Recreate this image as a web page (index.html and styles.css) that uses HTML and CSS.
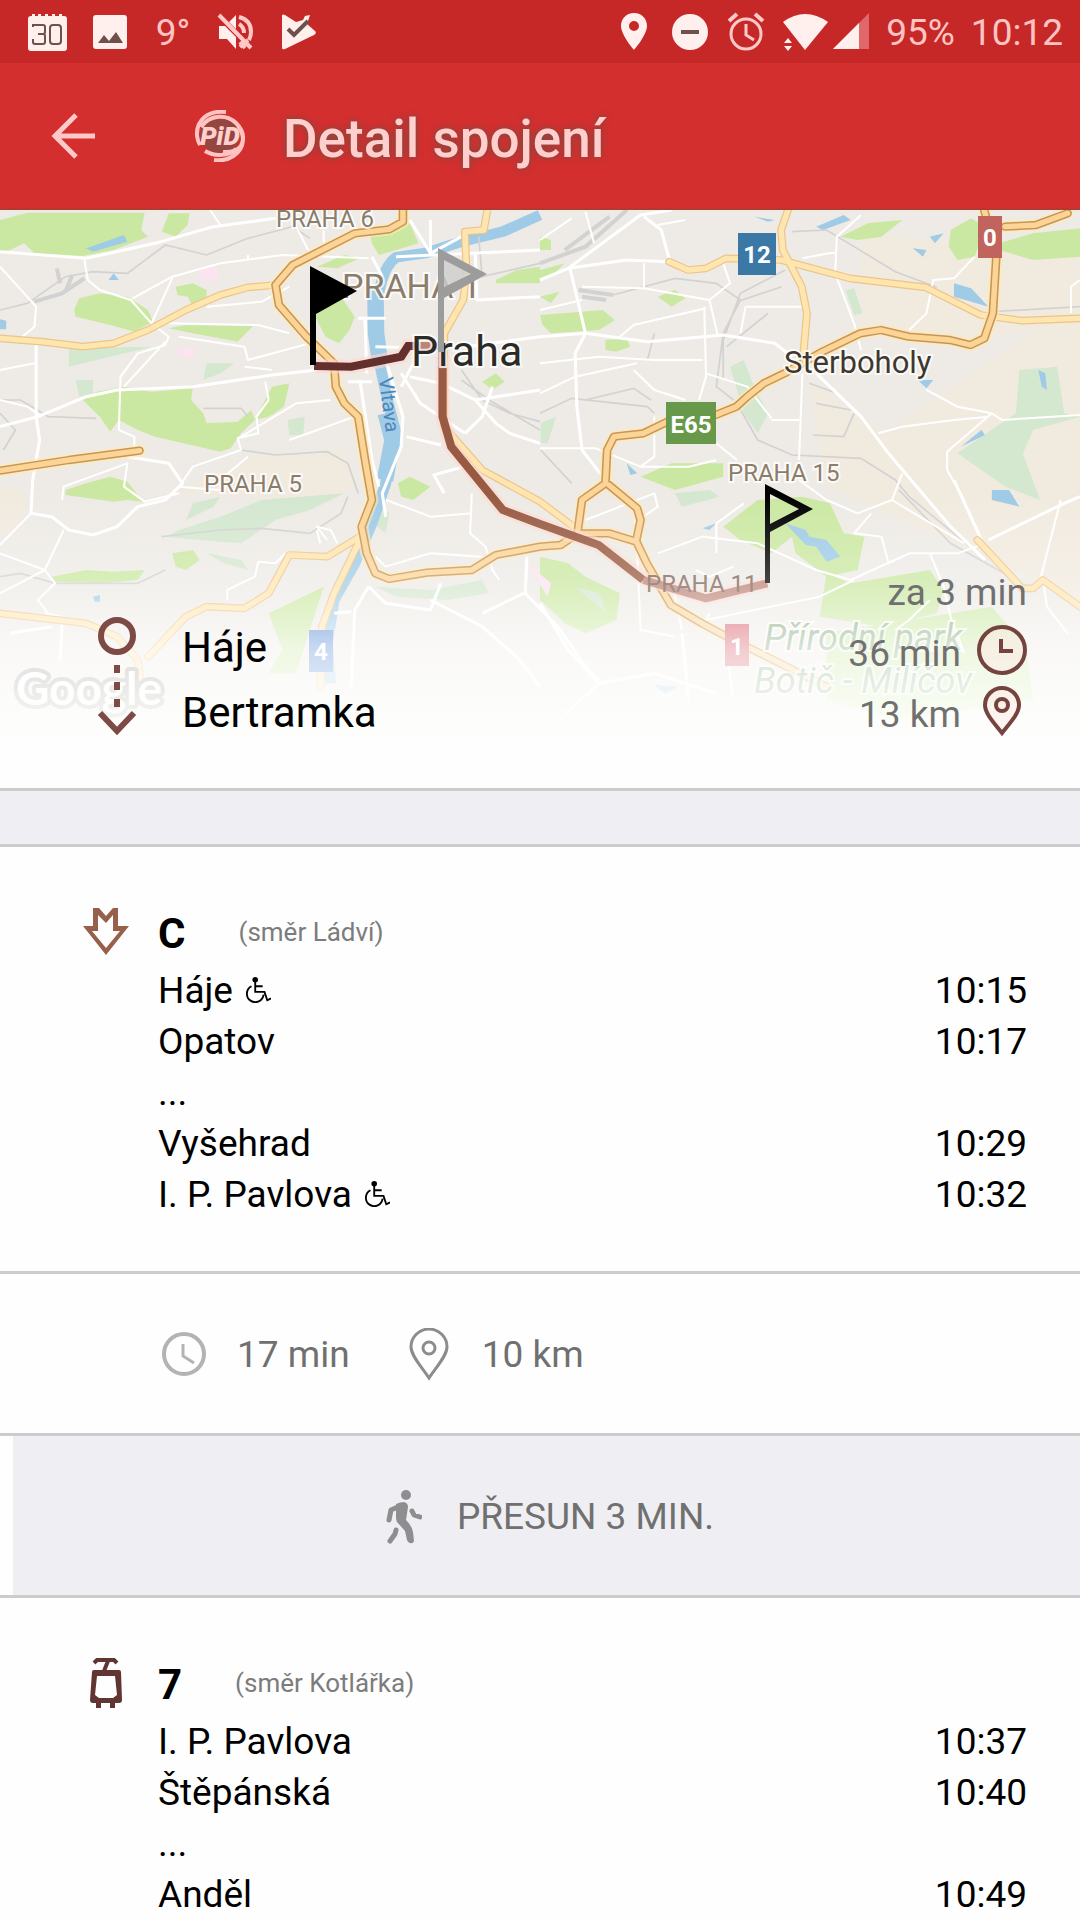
FILE: index.html
```html
<!DOCTYPE html>
<html lang="cs">
<head>
    <meta charset="UTF-8">
    <meta name="viewport" content="width=device-width, initial-scale=1.0">
    <title>Detail spojení</title>
    <link rel="stylesheet" href="styles.css">
</head>
<body>
    <div class="status-bar">
        <div class="status-group notifications">
            <svg width="40" height="40" viewBox="0 0 40 40">
                <path class="fill" d="M3 4h2V2h3v2h3V2h3v2h4V2h3v2h4V2h3v2h4V2h3v2h2q3 0 3 3v29q0 3-3 3H4q-3 0-3-3V7q0-3 3-3z"/>
                <path class="cut-line" d="M6 15v-2h10q2 0 2 2v5q0 2-2 2h-5 5q2 0 2 2v6q0 2-2 2H8q-2 0-2-2v-3M26 13h5q3 0 3 3v13q0 3-3 3h-5q-3 0-3-3V16q0-3 3-3z"/>
            </svg>
            <svg width="40" height="40" viewBox="0 0 40 40">
                <rect class="fill" x="3" y="3" width="34" height="34" rx="3"/>
                <path class="cut" d="M8 31l6-8 5 6 7-9 7 11z"/>
            </svg>
            <span class="temperature">9°</span>
            <svg width="40" height="40" viewBox="0 0 40 40">
                <path class="fill" d="M3 14h6l11 11v12L11 27H3zM13 10l7-7v14z"/>
                <path class="line thick" d="M23 5q12 3 12 15 0 4-2 8M23 12q5 3 5 9M3 3l32 33M24 35l8-7M24 30l5 6"/>
            </svg>
            <svg width="40" height="40" viewBox="0 0 40 40">
                <path class="fill" d="M3 3q1-1 3 0l11 7 7-2 2-4 5-1-3 9 8 7q2 2-1 4L6 37q-3 1-3-1z"/>
                <path class="cut-line heavy" d="M9 17l6 6 14-14"/>
            </svg>
        </div>
        <div class="status-group">
            <svg width="40" height="40" viewBox="0 0 40 40">
                <path class="fill" fill-rule="evenodd" d="M20 1C12 1 7 7 7 14c0 9 13 24 13 24s13-15 13-24C33 7 28 1 20 1zm0 8a5 5 0 1 1 0 10 5 5 0 0 1 0-10z"/>
            </svg>
            <svg width="40" height="40" viewBox="0 0 40 40">
                <circle class="fill" cx="20" cy="20" r="18"/>
                <path class="cut" d="M11 18h18v4H11z"/>
            </svg>
            <svg width="40" height="40" viewBox="0 0 40 40">
                <circle class="line" cx="20" cy="22" r="15"/>
                <path class="line" d="M20 12v11l8 5"/>
                <path class="line thick" d="M3 9l8-7M37 9l-8-7"/>
            </svg>
            <svg width="88" height="40" viewBox="0 0 88 40">
                <path class="fill" d="M1 10Q23-6 46 10L23 38z"/>
                <path class="fill" d="M2 31l4-5 4 5zM2 34h8l-4 5z"/>
                <path class="weak" d="M87 1v36H51z"/>
                <path class="fill" d="M77 11v26H51z"/>
            </svg>
            <span>95%</span>
            <span>10:12</span>
        </div>
    </div>

    <header class="app-bar">
        <button class="back" aria-label="Zpět">
            <svg width="48" height="48" viewBox="0 0 48 48">
                <path d="M27 3L6 24l21 21M6 24h40"/>
            </svg>
        </button>
        <svg class="logo" width="52" height="52" viewBox="0 0 52 52">
            <ellipse class="disc" cx="26" cy="26" rx="20" ry="17"/>
            <path d="M32 2C14 0 2 10 3 26q1 6 3 9M7 17C16 4 33 4 42 13q11 11 5 23-6 7-18 6M20 50c14 2 28-6 29-20 0-6-2-10-5-14M11 41c10 6 24 5 31-2"/>
            <text x="26" y="35">PiD</text>
        </svg>
        <h1>Detail spojení</h1>
    </header>

    <main>
        <section class="hero">
            <svg class="map" viewBox="0 0 1080 525">
                <defs>
                    <linearGradient id="fade" x1="0" y1="0" x2="0" y2="1">
                        <stop offset="0" stop-color="#fff" stop-opacity="0"/>
                        <stop offset="0.38" stop-color="#fff" stop-opacity="0.28"/>
                        <stop offset="0.65" stop-color="#fff" stop-opacity="0.7"/>
                        <stop offset="1" stop-color="#fefffc" stop-opacity="0.96"/>
                    </linearGradient>
                    <g id="minor-highways">
                        <path d="M0 415L120 425 240 440 330 430 430 390 540 330 640 285 720 262 800 255"/>
                        <path d="M1943 185L1998 210 2050 205 2108 175 2268 180 2468 235 2688 262 2848 345 2968 362 3136 355"/>
                        <path d="M2288 30L2268 90 2273 150 2328 260 2343 340 2333 460"/>
                        <path d="M1415 30L1405 90 1350 95 1355 220 1345 300 1290 400 1290 680 1400 810 1568 905 1678 990"/>
                        <path d="M1045 1010L950 1070 840 1065 780 1180 710 1225 600 1220 540 1250 430 1370"/>
                        <path d="M1045 1020L970 1180 935 1280 930 1460"/>
                        <path d="M0 1240L250 1270 340 1310 400 1380 410 1460"/>
                        <path d="M2838 1020L2968 1165 3000 1165 3028 1140 3136 1220"/>
                    </g>
                    <g id="highways">
                        <path d="M1170 30V65L1130 88 1030 100 850 195 800 255 810 315 890 410 970 490 975 560 1000 610 1040 650 1060 780 1080 900 1050 980 1065 1060 1090 1120 1130 1137 1240 1118 1370 1110 1440 1065 1568 1040 1628 1035 1678 1000 1768 1000 1848 1025 1878 1090 1948 1215 2038 1270 2110 1310 2400 1460"/>
                        <path d="M0 812L200 780 405 752"/>
                        <path d="M1678 990L1690 900 1758 850 1763 750 1783 710 1868 700 1938 665 2078 645 2138 620 2170 590 2218 550 2278 520 2388 455 2498 400 2558 390 2638 410 2758 420 2818 435 2858 415 2883 340 2893 170 2858 30"/>
                        <path d="M1768 855L1850 925 1860 960 1848 1020"/>
                        <path d="M2918 80L3008 75 3100 40"/>
                    </g>
                </defs>

                <!-- terrain and roads -->
                <g transform="matrix(.34439 0 0 .33333 0 -10)">
                    <rect class="land" width="3136" height="1610"/>
                    <path class="suburb" d="M2350 540L2568 700 3136 300V1200L2700 1000 2400 860zM2500 100L3136 170V380L2700 430 2500 380zM760 760L1000 750 1040 860 900 900 500 880zM0 860L80 880 60 980 0 1010z"/>
                    <g class="park">
                        <path d="M0 60L80 38H420L410 90 430 110 330 150 240 168 100 160 70 130 30 150 0 155z"/>
                        <path d="M490 40H550L545 75 510 110 470 95zM215 330L230 295 290 280 370 290 430 330 445 365 390 395 320 375 220 350zM490 385L540 375 735 378 690 425 560 400zM510 260L560 250 600 270V310L560 320 545 290 515 285z"/>
                        <path d="M240 600L280 575 360 560 440 575 560 565 555 600 590 640 600 670 690 665 730 630 740 660 700 700 670 745 640 755 450 710 400 690 345 660 320 695 290 650z"/>
                        <path d="M935 320L990 290 1030 350 1015 390 985 430 945 410 915 350zM1075 105L1190 70 1215 130 1150 150 1100 165 1080 130zM790 560L840 550 825 620 780 650 740 660 760 620zM850 550L915 520 860 545zM920 200L1000 165 1045 175 980 205zM1440 240L1500 210 1568 200V250H1440zM1400 545L1440 520 1465 545 1430 570zM1155 850L1190 830 1250 860 1200 900 1165 890z"/>
                        <path d="M190 870L250 850 320 830 370 845 415 905 370 900 330 905 190 885zM150 1130L250 1110 330 1115 420 1110 400 1140 300 1150 160 1145zM500 1060L560 1050 580 1080 540 1110 510 1100z"/>
                        <path d="M780 1240L940 1160 900 1290 860 1420 780 1420 820 1350z"/>
                        <path d="M1568 345L1750 330 1785 360 1740 390 1600 400 1575 375zM1568 110L1600 120V150H1568zM1568 210L1640 190 1600 230 1568 240zM1758 420L1820 415 1830 440 1790 455 1758 450zM1910 290L1960 270 1990 295 1950 320zM2440 110L2520 70 2620 60 2560 110 2490 120zM1568 290L1625 275 1600 310z"/>
                        <path d="M2760 90L2820 55 2860 80 2830 170 2780 180 2755 140zM2900 130L3000 100 3136 85V170L3000 180 2900 150z"/>
                        <path d="M1860 830L1950 790 2100 790 2100 830 1960 870zM2100 980L2200 900 2330 890 2410 910 2450 1000 2510 1010 2490 1110 2400 1130 2310 1060 2300 1010 2240 1060 2150 1020z"/>
                        <path d="M2400 1120L2470 1150 2700 1110 2740 1170 2720 1240 2560 1280 2380 1250zM2400 1300L2880 1220 2980 1340 3000 1500 2600 1560 2400 1500zM1568 1070L1650 1090 1700 1130 1800 1180 1790 1260 1700 1300 1640 1270 1568 1200z"/>
                    </g>
                    <path class="wood" d="M220 540H270V590H230zM600 490H680L640 520 590 540zM835 660L885 650 880 705H840zM560 910L640 890 620 920 540 960zM640 950L760 900 1000 880 900 930 800 960 700 1030 580 1020 480 1010 520 990zM600 1060L700 1080 720 1110 650 1090zM1100 920L1130 940 1120 1000 1095 980zM1090 1160L1250 1170 1400 1140 1420 1180 1300 1200 1150 1190zM2960 510L3070 500 3090 640 3136 650 3000 690 2970 760 3020 900 2920 860 2780 760 2950 640zM2120 500L2160 480 2190 560 2230 640 2200 700 2160 640zM1960 880L2060 870 2090 890 1980 920zM1570 670L1615 650 1590 730H1570zM200 445L440 440 200 500zM1670 1160L1740 1180 1760 1240zM2455 270L2480 265 2505 340 2480 345z"/>
                    <path class="pink" d="M575 200H630L635 245 580 240zM515 445L570 445 560 475 520 470zM1530 1090L1600 1150 1590 1190z"/>

                    <path class="river" d="M1568 45L1460 95 1340 125 1240 158 1150 172C1110 200 1095 280 1090 370L1100 480 1125 600 1150 700 1120 850 1080 970 1030 1090 970 1200 950 1330 960 1450"/>
                    <path class="river wide" d="M1090 270L1092 400 1105 500M1120 640L1140 720 1118 840"/>
                    <path class="water" d="M250 145L360 105 370 125 270 155zM315 240L330 220 345 240zM0 358L18 362V388H0zM2370 80L2450 45 2470 60 2390 90zM2190 50L2250 60 2230 65zM2700 110L2740 100 2715 130zM2650 145L2690 150 2680 170zM2770 250L2820 265 2870 320 2770 290zM3015 510L3035 520 3040 570 3025 560zM2665 540H2710L2690 565zM2790 740L2850 690 2860 705zM2880 870L2930 870 2960 920 2880 900zM2280 970L2340 990 2350 1010 2400 1020 2440 1070 2400 1085 2370 1040 2340 1035zM1820 790L1850 820 1830 825zM1900 1455L1970 1460 1930 1480zM270 1190L290 1185 290 1205 275 1205zM2040 985L2080 970 2060 990z"/>

                    <g class="rail">
                        <path d="M0 330L80 310 190 230 270 215 370 220 480 135 600 165 720 115 850 80 900 115"/>
                        <path class="rail-yard" d="M100 305L180 280 245 235M165 205L175 250M210 225L190 275"/>
                        <path d="M590 625L700 625 720 650M700 750L800 765 950 755 1010 790 1040 880M0 600L60 600 140 650 280 655M0 640L45 690 10 750"/>
                        <path d="M1340 510L1400 600 1480 640 1568 665M1340 540L1420 600 1568 690M1390 110L1400 230 1568 190"/>
                        <path class="rail-yard" d="M1568 190L1700 140 1820 30M1640 150L1770 50M1680 270L1780 285M1690 290L1760 300"/>
                        <path d="M1780 285L1960 235 2080 250 2150 300 2100 400 2080 560 2130 600M2300 95L2400 90 2480 140 2600 215 2720 262M2280 210L2150 280 2100 420 2100 540M2270 260L2140 305M2230 340L2110 440"/>
                        <path d="M1568 640L1660 595 1880 620 1900 640M1700 600L1840 565 1890 600M1570 750L1660 850M2140 610L2200 720 2300 765 2500 775 2600 840 2640 890 2840 1060M2350 550L2430 580M2370 610L2470 630M2360 705L2450 710 2480 640M2880 335L3136 320M2610 870L2760 1030 2950 1140M1900 400L1880 480"/>
                        <path d="M470 1010L640 990 760 985 900 1000 990 940 1010 890M0 1130L60 1120 160 1150 400 1150 480 1110"/>
                    </g>

                    <g class="road">
                        <path class="main" d="M0 155L250 175 450 130 620 80 800 55M0 680L110 650 250 590 340 570 560 560 790 525 920 510M105 430V650L115 720 95 840 90 940 150 950 200 990 270 1005 340 980 400 920 480 900 530 850 490 790 370 770"/>
                        <path d="M245 180L255 240 290 270 380 300 440 370M385 295L500 230 640 190 820 165 1070 175M500 235L440 370 490 410 480 435 400 460 350 530 345 690 390 710V745M0 200L105 320 100 380 60 415M360 560L480 425M490 370L750 375 840 400M600 320L760 305 840 260M0 510L100 490M0 600L80 620 120 650M720 165V180M860 80L900 160M940 90V130M610 30L640 75"/>
                        <path d="M770 545L780 600 745 650 750 700 690 715 700 750 560 800 520 860 640 870M700 710L860 610 960 600M840 720L1030 650M720 770L650 830M180 900L185 860 370 790 360 860 420 905 520 880M520 410L710 440 720 480 900 430M710 500L790 510"/>
                        <path class="main" d="M1040 355H1120M1060 360L1065 520M1010 545H1080M1090 440L1280 445M1080 170L1110 230M1045 540L1080 780 1100 860M1150 170L1568 150M1250 60V160M1190 60L1250 160 1340 110"/>
                        <path class="main" d="M1120 480L1170 650 1165 740 1110 880 1120 950M1165 520L1220 610 1350 700M1190 530L1280 550 1380 600 1440 670 1480 700 1568 730M1350 700L1400 650 1430 560M1300 560L1380 600 1568 570M1380 160L1385 300 1568 290M1350 440L1568 410M1180 710L1280 735M1380 790L1260 825 1290 880M1200 490L1165 560"/>
                        <path d="M0 1035L90 940M0 1060L130 1110 185 990M130 1110L160 1150 110 1200 140 1240M0 1180L130 1110M130 1240L180 1250M660 1200V1170L740 1130 750 1085 800 1090 830 1060M920 990L930 1030M950 1020L920 980 960 990 980 1030M1120 900L1200 930 1250 950 1370 940M1370 880L1365 1000 1410 1040 1430 1110 1450 1140M1090 1070L1120 1100 1250 1060 1400 1070"/>
                        <path class="main" d="M1070 1160L1030 1230 1020 1460M1070 1160L1120 1210 1250 1230 1280 1150M1530 1070L1525 1180 1620 1280 1700 1400 1740 1440M1250 1200L1400 1280 1500 1370 1568 1460M1400 1240L1520 1180M970 1240L1020 1235M30 1300L150 1280M180 1270L175 1380"/>
                        <path class="main" d="M1568 240L1650 205 1820 180 1945 185 1920 90 1870 50M1650 205L1860 45 1950 30M1655 205L1700 400 1670 460 1675 620 1690 750 1750 830M1568 410L1700 400 1880 425 2100 405 2250 430 2300 470M2370 520L2500 650 2580 760 2760 980 2860 1080"/>
                        <path d="M1568 330L1690 300M1690 260L1870 265 2060 300 2120 250 2100 190M1870 190V265M2060 300L2085 410M1800 410L1840 375 2050 325M2045 320L2050 530 2030 600M1568 490L1740 470 1900 480 2040 480M1568 580L1670 530 1850 490M1840 510L1900 570 1990 600M2150 400L2165 320H2330M2330 520L2320 780M2240 660H2320M2050 520L2170 560 2240 655M1700 35L1725 130M1568 120L1660 55M1910 75L1990 60M2330 175L2430 155M2500 45L2430 110 2425 220 2480 370 2500 450M2830 170L2770 235 2710 240 2690 340 2640 390M3136 240L3110 260V340M2690 570L2780 620 2880 640 2910 660 3136 645M2880 640L2750 755V810L2800 900M2550 700L2620 680 2770 660 2870 650"/>
                        <path d="M1568 745L1730 745 1860 800 2000 800 2080 780M1900 650V770L1860 800M2080 730L2140 780M2620 820L2590 900 2490 940 2400 900 2320 840M2590 900L2800 1030M2860 1030L2780 1060 2640 1060 2470 1140 2370 1110 2200 1030 2040 1010 1910 1060M2480 1140L2380 1190 2050 1260 2060 1240M2640 1060L2580 1090 2560 1010 2480 1000 2530 940M2080 1060L2080 970 2160 910M1700 960L1900 880 1910 920 1840 970M2020 1110L2060 1130 2130 1100M2700 1060L2740 1160 2760 1250 2800 1360M2600 1290L2640 1260 2700 1200M3020 1140L3080 900M3030 1150L3040 1220 3100 1300M1850 1050L1860 1290 1960 1310M1950 1140L1980 1290M2110 1350L2130 1500"/>
                        <path class="main" d="M2770 840L2850 1020M2870 1020L3090 910 3136 890M1568 1210L1650 1350 1740 1450 1900 1420 2080 1480M1980 1300L2000 1500M1740 1450L1620 1560"/>
                    </g>

                    <use href="#minor-highways" class="minor-case"/>
                    <use href="#minor-highways" class="minor-fill"/>
                    <use href="#highways" class="highway-glow"/>
                    <use href="#highways" class="highway-case"/>
                    <use href="#highways" class="highway-fill"/>

                    <path class="trip-glow" d="M1285 470V650L1310 740 1460 930 1568 972 1738 1035 1868 1135 2050 1195 2228 1150"/>
                    <path class="trip-metro" d="M1285 500V650L1310 740 1460 930 1568 972 1738 1035 1868 1140"/>
                    <path class="trip-metro pale" d="M1868 1140L2050 1195 2228 1150"/>
                    <path class="trip-glow" d="M912 498L1020 500 1165 470 1185 438 1275 438"/>
                    <path class="trip-tram" d="M912 498L1020 500 1165 470 1185 438H1215"/>
                    <path class="trip-metro pale" d="M1215 438H1285V505"/>
                </g>

                <!-- labels -->
                <g class="map-label district">
                    <text x="276" y="17">PRAHA 6</text>
                    <text class="big" x="342" y="88">PRAHA 1</text>
                    <text x="204" y="282">PRAHA 5</text>
                    <text x="728" y="271">PRAHA 15</text>
                    <text class="light" x="646" y="382">PRAHA 11</text>
                </g>
                <g class="map-label">
                    <text class="city" x="411" y="156">Praha</text>
                    <text class="town" x="784" y="163">Sterboholy</text>
                    <text class="river-name" transform="translate(379 168) rotate(83)">Vltava</text>
                    <text class="nature" x="764" y="440">Přírodní park</text>
                    <text class="nature" x="754" y="483">Botič - Milíčov</text>
                </g>
                <text class="google" x="16" y="495">Google</text>
                <g class="shield">
                    <rect x="738" y="23" width="38" height="42" fill="#3b78a6"/>
                    <text x="757" y="53">12</text>
                    <rect x="978" y="6" width="24" height="42" fill="#c0645d"/>
                    <text x="990" y="36">0</text>
                    <rect x="666" y="192" width="50" height="42" fill="#68994a"/>
                    <text x="691" y="223">E65</text>
                    <rect x="309" y="420" width="24" height="42" fill="#4f86d6"/>
                    <text x="321" y="450">4</text>
                    <rect x="725" y="414" width="24" height="42" fill="#d65a66"/>
                    <text x="737" y="445">1</text>
                </g>

                <!-- flags -->
                <path d="M310 56l47 25-41 23v51h-6z"/>
                <path class="flag-mid" d="M441 43l40 21-40 21z"/>
                <path class="flag-mid-pole" d="M438 38l49 26-43 24v54h-6zM444 50v27l27-13z" fill-rule="evenodd"/>
                <path d="M765 274l48 25-43 23v51h-5zM770 284v30l29-15z" fill-rule="evenodd"/>

                <rect y="285" width="1080" height="240" fill="url(#fade)"/>
            </svg>

            <div class="overview">
                <svg class="route-icon" width="40" height="120" viewBox="0 0 40 120">
                    <circle cx="20" cy="19" r="16"/>
                    <path d="M20 48v44" stroke-dasharray="8 9"/>
                    <path d="M3 96l17 18 17-18"/>
                </svg>
                <div class="places">
                    <div>Háje</div>
                    <div>Bertramka</div>
                </div>
                <div class="totals">
                    <div>za 3 min</div>
                    <div>36 min
                        <svg width="50" height="50" viewBox="0 0 50 50">
                            <circle cx="25" cy="25" r="23"/>
                            <path class="hands" d="M24 14v12h12"/>
                        </svg>
                    </div>
                    <div>13 km
                        <svg width="50" height="50" viewBox="0 0 50 50">
                            <path d="M25 47C18 38 8 28 8 19a17 17 0 0 1 34 0c0 9-10 19-17 28z"/>
                            <circle cx="25" cy="19" r="6"/>
                        </svg>
                    </div>
                </div>
            </div>
        </section>

        <div class="divider"></div>

        <section class="leg">
            <div class="leg-head">
                <svg class="leg-icon metro" width="50" height="50" viewBox="0 0 50 50">
                    <path d="M13 1h6l7 8 7-8h5v18h11L26 48 3 19h10zM18 8v16h-6l14 17 14-17h-7V8l-7 8z" fill-rule="evenodd"/>
                </svg>
                <h2>C</h2>
                <span class="direction">(směr Ládví)</span>
            </div>
            <table class="stops">
                <tr>
                    <td>Háje
                        <svg class="wheelchair" width="26" height="26" viewBox="0 0 28 28">
                            <circle cx="11" cy="3" r="3"/>
                            <path d="M11 5v11h10l3 9 4-2M11 10h8M7 10a9 9 0 1 0 13 9"/>
                        </svg>
                    </td>
                    <td>10:15</td>
                </tr>
                <tr><td>Opatov</td><td>10:17</td></tr>
                <tr><td>...</td><td></td></tr>
                <tr><td>Vyšehrad</td><td>10:29</td></tr>
                <tr>
                    <td>I. P. Pavlova
                        <svg class="wheelchair" width="26" height="26" viewBox="0 0 28 28">
                            <circle cx="11" cy="3" r="3"/>
                            <path d="M11 5v11h10l3 9 4-2M11 10h8M7 10a9 9 0 1 0 13 9"/>
                        </svg>
                    </td>
                    <td>10:32</td>
                </tr>
            </table>
        </section>

        <div class="leg-summary">
            <svg width="46" height="54" viewBox="0 0 46 54">
                <circle class="clock" cx="23" cy="26" r="20"/>
                <path class="clock-hands" d="M22 16v12l11 7"/>
            </svg>
            <span class="duration">17 min</span>
            <svg width="46" height="54" viewBox="0 0 46 54">
                <path class="pin" d="M23 50C16 39 5 28 5 19a18 18 0 0 1 36 0c0 9-11 20-18 31z"/>
                <circle class="pin" cx="23" cy="20" r="6"/>
            </svg>
            <span>10 km</span>
        </div>

        <div class="transfer">
            <svg width="36" height="56" viewBox="0 0 36 56">
                <circle cx="20" cy="6" r="5"/>
                <path class="limb" d="M14 17l-9 4-2 10M26 22l2 4 6 2M10 41l-1 4-5 7"/>
                <path d="M10 15q4-2 8-2 4 1 4 5l-2 13q6 6 7 12l1 9q-1 3-4 2-2 0-3-3l-2-9-8-9q-1-2-1-5z"/>
            </svg>
            <span>PŘESUN 3 MIN.</span>
        </div>

        <section class="leg last">
            <div class="leg-head">
                <svg class="leg-icon tram" width="50" height="50" viewBox="0 0 50 50">
                    <path class="wire" d="M14 5l3-3h17l3 3M28 3l-4 10"/>
                    <path fill-rule="evenodd" d="M12 12h27q2 0 2 2l1 28q0 3-3 3h-4v5h-5v-5h-9v5h-5v-5h-3q-3 0-3-3l2-28q0-2 2-2zm5 6l-2 19 4 3h14l4-3-2-19z"/>
                </svg>
                <h2>7</h2>
                <span class="direction">(směr Kotlářka)</span>
            </div>
            <table class="stops">
                <tr><td>I. P. Pavlova</td><td>10:37</td></tr>
                <tr><td>Štěpánská</td><td>10:40</td></tr>
                <tr><td>...</td><td></td></tr>
                <tr><td>Anděl</td><td>10:49</td></tr>
            </table>
        </section>
    </main>
</body>
</html>
```
FILE: styles.css
```css
* {
    margin: 0;
    padding: 0;
    box-sizing: border-box;
}
body {
    font-family: Roboto, sans-serif;
    font-size: 37px;
    color: #000;
    background: #fefefe;
}
svg {
    display: block;
    flex-shrink: 0;
}

/* status bar */
.status-bar {
    display: flex;
    justify-content: space-between;
    height: 63px;
    padding: 0 17px 0 27px;
    background: #c62828;
    color: #ffc4c2;
}
.status-group {
    display: flex;
    align-items: center;
    gap: 16px;
}
.notifications {
    gap: 23px;
}
.temperature {
    width: 40px;
    text-align: center;
}
.status-bar span {
    padding-top: 2px;
}
.status-bar .fill {
    fill: #fff0ee;
}
.status-bar .weak {
    fill: #e0686a;
}
.status-bar .line {
    fill: none;
    stroke: #ffc9c7;
    stroke-width: 3;
}
.status-bar .thick {
    stroke-width: 4;
}
.status-bar .cut {
    fill: #70504b;
}
.status-bar .cut-line {
    fill: none;
    stroke: #70504b;
    stroke-width: 2;
}
.status-bar .heavy {
    stroke-width: 4;
}

/* app bar */
.app-bar {
    display: flex;
    align-items: center;
    height: 147px;
    padding-left: 49px;
    background: #d32f2f;
    border-bottom: 2px solid #b5392f;
}
.back {
    border: none;
    background: none;
}
.back path {
    fill: none;
    stroke: #ffc9c7;
    stroke-width: 5;
}
.logo {
    margin: 0 37px 0 97px;
}
.logo path {
    fill: none;
    stroke: #ffc4c2;
    stroke-width: 4;
}
.logo .disc {
    fill: #95463f;
}
.logo text {
    fill: #ffd0ce;
    font-size: 26px;
    font-weight: 900;
    font-style: italic;
    text-anchor: middle;
}
.app-bar h1 {
    padding-top: 6px;
    font-size: 53px;
    font-weight: 500;
    color: #ffcfcd;
    text-shadow: 0 0 6px rgba(90, 85, 70, 0.9);
}

/* map with trip overview */
.hero {
    display: grid;
    padding-bottom: 43px;
}
.map {
    grid-area: 1 / 1;
    width: 100%;
    height: auto;
    margin-bottom: 10px;
}
.land { fill: #eeebe6; }
.suburb { fill: #f1eadf; }
.park { fill: #cbe8a2; }
.wood { fill: #d4e7cf; }
.pink { fill: #fbe3f0; }
.water { fill: #9fcbe6; }
.river {
    fill: none;
    stroke: #a0cbe6;
    stroke-width: 32;
    stroke-linejoin: round;
}
.river.wide {
    stroke-width: 48;
}
.rail {
    fill: none;
    stroke: #d3d2d2;
    stroke-width: 5;
}
.rail-yard {
    stroke-width: 12;
}
.road {
    fill: none;
    stroke: #fff;
    stroke-width: 6;
    stroke-linejoin: round;
}
.road .main {
    stroke-width: 9;
}
.minor-case,
.minor-fill,
.highway-glow,
.highway-case,
.highway-fill {
    fill: none;
    stroke-linejoin: round;
    stroke-linecap: round;
}
.minor-case {
    stroke: #ecc48a;
    stroke-width: 23;
}
.minor-fill {
    stroke: #ffe5ae;
    stroke-width: 16;
}
.highway-glow {
    stroke: #ffe9bd;
    stroke-width: 38;
    opacity: 0.6;
}
.highway-case {
    stroke: #c8964f;
    stroke-width: 25;
}
.highway-fill {
    stroke: #fcd497;
    stroke-width: 16;
}
.trip-glow,
.trip-metro,
.trip-tram {
    fill: none;
    stroke-width: 24;
}
.trip-glow {
    stroke: #ffd9cf;
    stroke-width: 42;
    opacity: 0.6;
}
.trip-metro {
    stroke: #985a42;
}
.trip-metro.pale {
    stroke: #bd8577;
}
.trip-tram {
    stroke: #63302e;
}
.map-label text {
    font-size: 24px;
    fill: #40382f;
    stroke: rgba(255, 255, 255, 0.75);
    stroke-width: 4px;
    paint-order: stroke;
}
.map-label.district text {
    fill: #8b7d6a;
}
.map-label.district .big {
    font-size: 34px;
}
.map-label.district .light {
    fill: #7c6258;
    stroke: none;
}
.map-label .city {
    font-size: 43px;
    fill: #2c2a26;
}
.map-label .town {
    font-size: 31px;
}
.map-label .river-name {
    font-size: 20px;
    fill: #4a86b8;
    stroke: none;
}
.map-label .nature {
    font-size: 36px;
    font-style: italic;
    fill: #7fa67a;
}
.google {
    font-family: Lato, sans-serif;
    font-size: 46px;
    font-weight: 700;
    fill: #fff;
    stroke: #8f8f8f;
    stroke-width: 8px;
    stroke-linejoin: round;
    paint-order: stroke;
}
.shield text {
    font-size: 24px;
    font-weight: 700;
    fill: #fff;
    text-anchor: middle;
}
.flag-mid {
    fill: #cdcdcd;
    opacity: 0.8;
}
.flag-mid-pole {
    fill: #9c9c9c;
}

.overview {
    grid-area: 1 / 1;
    align-self: end;
    display: flex;
    align-items: flex-end;
    padding: 0 53px 0 97px;
}
.route-icon {
    margin: 0 45px 8px 0;
    fill: none;
    stroke: #7d4a45;
    stroke-width: 6;
}
.places {
    flex: 1;
    font-size: 42px;
    line-height: 65px;
}
.totals {
    line-height: 61px;
    color: #707070;
}
.totals div {
    display: flex;
    align-items: flex-start;
    justify-content: flex-end;
    gap: 16px;
}
.totals svg {
    margin-top: 2px;
    fill: #fdeae5;
    fill-opacity: 0.5;
    stroke: #76443f;
    stroke-width: 4;
}
.totals svg .hands {
    fill: none;
}

.divider {
    height: 59px;
    background: #eeeef3;
    border-top: 3px solid #ccc;
    border-bottom: 3px solid #ccc;
}

/* one vehicle of the trip */
.leg {
    padding: 51px 53px 51px 80px;
}
.leg.last {
    padding-bottom: 0;
}
.leg-head {
    display: flex;
    align-items: center;
    height: 67px;
}
.leg-icon {
    margin-right: 28px;
}
.leg-icon.metro {
    fill: #96604a;
}
.leg-icon.tram {
    fill: #613531;
}
.leg-icon .wire {
    fill: none;
    stroke: #613531;
    stroke-width: 4;
}
.leg-head h2 {
    padding-top: 4px;
    font-size: 42px;
    font-weight: 700;
}
.direction {
    margin-left: 53px;
    font-size: 26px;
    color: #7c7c7c;
}
.stops {
    width: 100%;
    padding-left: 78px;
    border-spacing: 0;
}
.stops td {
    height: 51px;
    line-height: 51px;
}
.stops td:last-child {
    text-align: right;
}
.wheelchair {
    display: inline-block;
    margin-left: 3px;
    fill: #000;
}
.wheelchair path {
    fill: none;
    stroke: #000;
    stroke-width: 2;
}

.leg-summary,
.transfer {
    display: flex;
    align-items: center;
    height: 162px;
    padding-top: 2px;
    border-top: 3px solid #ccc;
    color: #707070;
}
.leg-summary {
    gap: 30px;
    padding-left: 161px;
}
.leg-summary svg {
    fill: none;
    stroke: #8c8c8c;
    stroke-width: 3;
}
.leg-summary .clock {
    stroke: #b3b3b3;
    stroke-width: 4;
}
.leg-summary .clock-hands {
    stroke: #b3b3b3;
}
.duration {
    margin-right: 26px;
}
.transfer {
    justify-content: center;
    gap: 35px;
    height: 165px;
    padding-left: 20px;
    border-bottom: 3px solid #ccc;
    background: linear-gradient(to right, #fefefe 13px, #eeeef3 13px);
}
.transfer svg {
    fill: #8e8e90;
}
.transfer .limb {
    fill: none;
    stroke: #8e8e90;
    stroke-width: 5;
    stroke-linecap: round;
    stroke-linejoin: round;
}
```
